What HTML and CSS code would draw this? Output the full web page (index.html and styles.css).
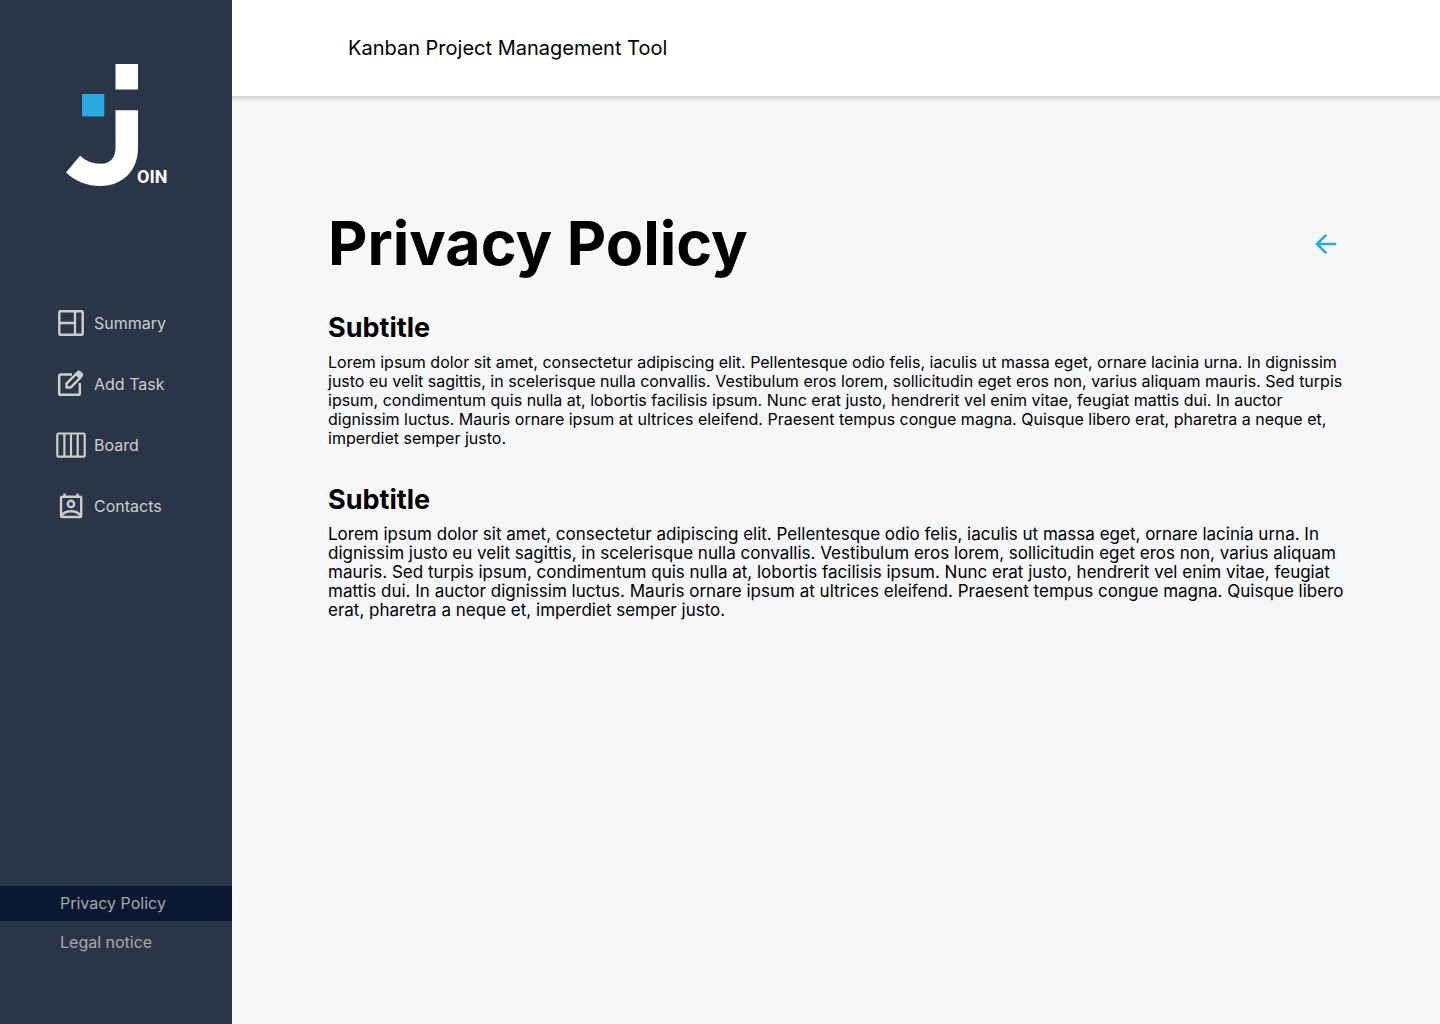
FILE: index.html
```html
<!DOCTYPE html>
<html lang="en">
<head>
<meta charset="utf-8">
<meta name="viewport" content="width=device-width, initial-scale=1">
<title>Join - Privacy Policy</title>
<link rel="stylesheet" href="styles.css">
</head>
<body>
<div class="app">
  <aside class="sidebar">
    <a class="logo" href="#" aria-label="Join home">
      <svg width="102" height="124" viewBox="66 64 102 124">
        <path fill="#fff" d="M115.5 64H138v25.500H115.500zM115.500 110.300H138V148C138 171 122 186 100.500 186C87 186 76 181.500 66 172.500L80 155.800C86 161 92 163.700 100.500 163.700C110.500 163.700 115.500 158 115.500 147z"/>
        <path fill="#29abe2" d="M82 94h22.300v22.500H82z"/>
        <text class="logo-text" x="137" y="183">OIN</text>
      </svg>
    </a>
    <nav class="menu" aria-label="Main">
      <a class="menu-link" href="#">
        <svg width="30" height="30" viewBox="0 0 30 30" fill="none" stroke="currentColor" stroke-width="2.400"><rect x="3.300" y="3.300" width="23.400" height="23.400" rx="1.300"/><path d="M19 3v24M3 15h16"/></svg>
        Summary
      </a>
      <a class="menu-link" href="#">
        <svg width="30" height="30" viewBox="0 0 30 30" fill="none" stroke="currentColor" stroke-width="2.500" stroke-linejoin="round"><path d="M16 5.500H4.500Q3.200 5.500 3.200 6.800V24.500Q3.200 25.800 4.500 25.800H22.500Q23.800 25.800 23.800 24.500V14"/><path d="M10.500 18.600v-4L20.200 4.900l4 4L14.500 18.600z"/><path fill="currentColor" stroke-width="1.500" d="M19.500 4.800L22 2.600q1-.8 2 .1l2.200 2.200q.8 1 0 2L24 9.300z"/></svg>
        Add Task
      </a>
      <a class="menu-link" href="#">
        <svg width="30" height="30" viewBox="0 0 30 30" fill="none" stroke="currentColor" stroke-width="2.200"><rect x="1.300" y="3.500" width="27.400" height="23.200" rx="1.300"/><path d="M8.400 3.500v23M15 3.500v23M21.700 3.500v23"/></svg>
        Board
      </a>
      <a class="menu-link" href="#">
        <svg width="30" height="30" viewBox="0 0 30 30" fill="none" stroke="currentColor" stroke-width="2.400"><rect x="5" y="5.800" width="20.200" height="20.200" rx="1.300"/><path d="M8.500 2.500v3M21.500 2.500v3M6 24.500Q8 20.200 15 20.200T24.200 24.500"/><circle cx="15" cy="13" r="3.200"/></svg>
        Contacts
      </a>
    </nav>
    <nav class="legal" aria-label="Legal">
      <a class="legal-link active" href="#" aria-current="page">Privacy Policy</a>
      <a class="legal-link" href="#">Legal notice</a>
    </nav>
  </aside>
  <div class="page">
    <header class="topbar">Kanban Project Management Tool</header>
    <main class="content">
      <div class="title-row">
        <h1>Privacy Policy</h1>
        <button class="back" type="button" aria-label="Go back">
          <svg width="22" height="22" viewBox="0 0 22 22" fill="none" stroke="#29abe2" stroke-width="2.500" stroke-linecap="round" stroke-linejoin="round"><path d="M20 12H2M10.500 3.500L2 12l8.500 8.500"/></svg>
        </button>
      </div>
      <section class="block">
        <h2>Subtitle</h2>
        <p>Lorem ipsum dolor sit amet, consectetur adipiscing elit. Pellentesque odio felis, iaculis ut massa eget, ornare lacinia urna. In dignissim justo eu velit sagittis, in scelerisque nulla convallis. Vestibulum eros lorem, sollicitudin eget eros non, varius aliquam mauris. Sed turpis ipsum, condimentum quis nulla at, lobortis facilisis ipsum. Nunc erat justo, hendrerit vel enim vitae, feugiat mattis dui. In auctor dignissim luctus. Mauris ornare ipsum at ultrices eleifend. Praesent tempus congue magna. Quisque libero erat, pharetra a neque et, imperdiet semper justo.</p>
      </section>
      <section class="block">
        <h2>Subtitle</h2>
        <p class="wide">Lorem ipsum dolor sit amet, consectetur adipiscing elit. Pellentesque odio felis, iaculis ut massa eget, ornare lacinia urna. In dignissim justo eu velit sagittis, in scelerisque nulla convallis. Vestibulum eros lorem, sollicitudin eget eros non, varius aliquam mauris. Sed turpis ipsum, condimentum quis nulla at, lobortis facilisis ipsum. Nunc erat justo, hendrerit vel enim vitae, feugiat mattis dui. In auctor dignissim luctus. Mauris ornare ipsum at ultrices eleifend. Praesent tempus congue magna. Quisque libero erat, pharetra a neque et, imperdiet semper justo.</p>
      </section>
    </main>
  </div>
</div>
</body>
</html>
```
FILE: styles.css
```css
* {
  box-sizing: border-box;
}

body {
  margin: 0;
  font-family: Inter, "Liberation Sans", sans-serif;
  font-size: 16px;
  line-height: 19px;
  color: #000;
  background: #f6f7f8;
}

h1,
h2,
p {
  margin: 0;
}

a {
  text-decoration: none;
}

.app {
  display: flex;
  min-height: 100vh;
}

.sidebar {
  display: flex;
  flex-direction: column;
  flex: 0 0 232px;
  padding: 64px 0;
  background: #2a3647;
}

.logo {
  display: flex;
  padding-left: 66px;
}

.logo-text {
  font-family: Roboto, "Liberation Sans", sans-serif;
  font-size: 18px;
  font-weight: 700;
  fill: #fff;
}

.menu {
  display: flex;
  flex-direction: column;
  gap: 16px;
  margin-top: 112px;
}

.menu-link {
  display: flex;
  align-items: center;
  gap: 8px;
  height: 45px;
  padding-left: 56px;
  line-height: 20px;
  color: #cdcdcd;
}

.legal {
  display: flex;
  flex-direction: column;
  gap: 4px;
  margin-top: auto;
}

.legal-link {
  padding: 8px 60px;
  white-space: nowrap;
  color: #a8a8a8;
}

.legal-link.active {
  background: #091931;
}

.page {
  flex: 1;
  min-width: 0;
}

.topbar {
  display: flex;
  align-items: center;
  height: 96px;
  padding: 0 116px;
  font-size: 20px;
  line-height: 24px;
  background: #fff;
  box-shadow: 0 0 4px 3px rgba(0, 0, 0, 0.15);
  clip-path: inset(0 0 -8px 0);
}

.content {
  padding: 110px 90px 64px 96px;
}

.title-row {
  display: flex;
  align-items: center;
  justify-content: space-between;
}

h1 {
  font-size: 61px;
  line-height: 74px;
  font-weight: 700;
}

.back {
  display: flex;
  padding: 4px 13px;
  border: 0;
  background: none;
  cursor: pointer;
}

.block {
  margin-top: 31px;
}

.block + .block {
  margin-top: 35px;
}

h2 {
  margin-bottom: 9px;
  font-size: 27px;
  line-height: 33px;
  font-weight: 700;
}

.wide {
  font-size: 17px;
}
```
